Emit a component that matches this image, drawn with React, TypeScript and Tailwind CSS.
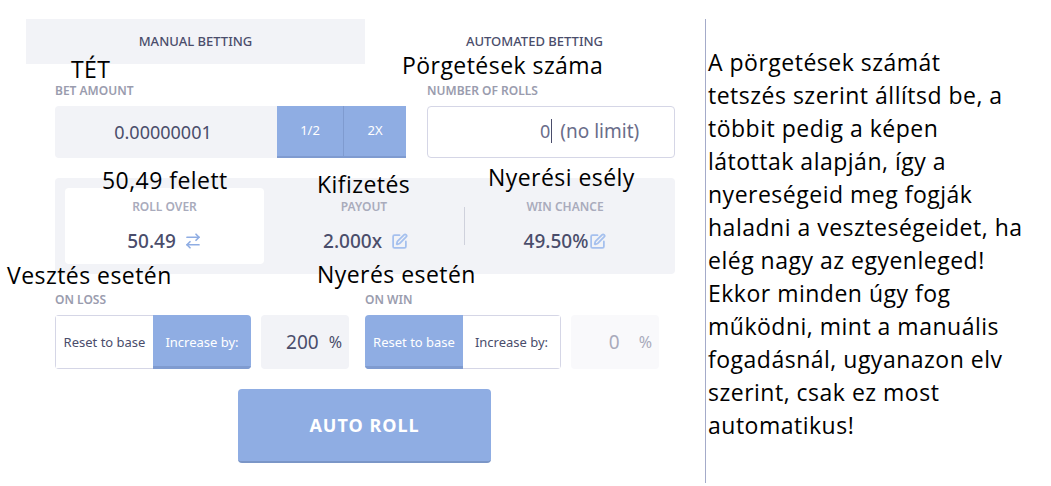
import { ArrowRightLeft, SquarePen } from "lucide-react";

const note = "absolute whitespace-nowrap text-black text-[23px] leading-[26px] tracking-[0.45px] font-['Open_Sans',sans-serif]";
const label = "text-[12px] leading-[16px] font-semibold text-[#9a9cae] uppercase";

const lines = [
  "A pörgetések számát",
  "tetszés szerint állítsd be, a",
  "többit pedig a képen",
  "látottak alapján, így a",
  "nyereségeid meg fogják",
  "haladni a veszteségeidet, ha",
  "elég nagy az egyenleged!",
  "Ekkor minden úgy fog",
  "működni, mint a manuális",
  "fogadásnál, ugyanazon elv",
  "szerint, csak ez most",
  "automatikus!",
];

function Toggle({ active }: { active: "left" | "right" }) {
  const on = "w-[98px] flex items-center justify-center bg-[#8fade3] text-white border-b-[3px] border-[#7f9bd0] pt-[5px]";
  const off = "w-[98px] flex items-center justify-center text-[#4a4d6b] border-y border-[#d5d6e6] pt-[2px]";
  return (
    <div className="flex w-[196px] h-[54px] text-[13px] rounded-sm overflow-hidden">
      <div className={active === "left" ? on : `${off} border-l`}>Reset to base</div>
      <div className={active === "right" ? on : `${off} border-r`}>Increase by:</div>
    </div>
  );
}

export default function App() {
  return (
    <div className="relative flex w-[1051px] h-[486px] overflow-hidden bg-white font-['Noto_Sans',sans-serif]">
      <div className="w-[705px] h-[464px] mt-[19px] border-r border-[#a4abc9] box-content shrink-0">
        <div className="flex ml-[26px] w-[678px] h-[45px] text-[13px] font-medium text-[#4a4d6b]">
          <div className="w-[339px] flex items-center justify-center bg-[#f2f3f7]">MANUAL BETTING</div>
          <div className="w-[339px] flex items-center justify-center">AUTOMATED BETTING</div>
        </div>

        <div className="ml-[55px] w-[620px]">
          <div className="flex justify-between mt-[19px]">
            <div className="w-[351px]">
              <div className={label}>Bet amount</div>
              <div className="flex h-[52px] mt-[7px]">
                <div className="w-[222px] flex items-center justify-center bg-[#f2f3f7] rounded-l pr-[6px] text-[18px] text-[#4a4d6b]">0.00000001</div>
                <div className="w-[67px] flex items-center justify-center bg-[#8fade3] border-b-[2px] border-r border-[#7f9bd0] text-white text-[13px]">1/2</div>
                <div className="w-[62px] flex items-center justify-center bg-[#8fade3] border-b-[2px] border-[#7f9bd0] text-white text-[13px]">2X</div>
              </div>
            </div>
            <div className="w-[248px]">
              <div className={label}>Number of rolls</div>
              <div className="flex items-center h-[52px] mt-[7px] pl-[112px] pb-[2px] border border-[#d5d6e6] rounded text-[19px] text-[#6a6d8a]">
                <span className="border-r border-[#4a4d6b] pr-px leading-[24px] text-[18px]">0</span>
                <span className="ml-[8px]">(no limit)</span>
              </div>
            </div>
          </div>

          <div className="flex items-center h-[96px] mt-[20px] px-[10px] bg-[#f2f3f7] rounded">
            <div className="w-[199px] h-[76px] flex flex-col items-center bg-white rounded pt-[11px]">
              <div className={`${label} !text-[#a9abbc]`}>Roll over</div>
              <div className="flex items-center mt-[12px] text-[19px] font-medium text-[#4a4d6b]">
                50.49
                <ArrowRightLeft className="ml-[8px] w-[18px] h-[18px] text-[#8fade3]" strokeWidth={2.25} />
              </div>
            </div>
            <div className="w-[200px] h-[76px] flex flex-col items-center pt-[11px] pl-[3px]">
              <div className={`${label} !text-[#a9abbc] -ml-[3px]`}>Payout</div>
              <div className="flex items-center mt-[12px] text-[19px] font-medium text-[#4a4d6b]">
                2.000x
                <SquarePen className="ml-[9px] w-[17px] h-[17px] text-[#a5c0ee]" strokeWidth={2.5} />
              </div>
            </div>
            <div className="w-px h-[38px] bg-[#cfd1dc]" />
            <div className="flex-1 h-[76px] flex flex-col items-center pt-[11px]">
              <div className={`${label} !text-[#a9abbc]`}>Win chance</div>
              <div className="flex items-center mt-[12px] text-[19px] font-medium text-[#4a4d6b]">
                49.50%
                <SquarePen className="ml-px w-[17px] h-[17px] text-[#a5c0ee]" strokeWidth={2.5} />
              </div>
            </div>
          </div>

          <div className="flex mt-[18px]">
            <div className="w-[310px]">
              <div className={label}>On loss</div>
              <div className="flex gap-[10px] mt-[7px]">
                <Toggle active="right" />
                <div className="w-[88px] h-[54px] flex items-center justify-end pr-[7px] bg-[#f2f3f7] rounded text-[#4a4d6b]">
                  <span className="text-[19px]">200</span>
                  <span className="ml-[10px] text-[16px]">%</span>
                </div>
              </div>
            </div>
            <div>
              <div className={label}>On win</div>
              <div className="flex gap-[10px] mt-[7px]">
                <Toggle active="left" />
                <div className="w-[88px] h-[54px] flex items-center justify-end pr-[7px] bg-[#f9f9fb] rounded text-[#a9abbc]">
                  <span className="text-[19px]">0</span>
                  <span className="ml-[19px] text-[16px]">%</span>
                </div>
              </div>
            </div>
          </div>

          <div className="flex justify-center mt-[20px] pr-px">
            <div className="w-[253px] h-[74px] flex items-center justify-center pt-px bg-[#8fade3] border-b-[2px] border-[#7b96c7] rounded-sm text-white text-[18px] font-bold tracking-[1px]">
              AUTO ROLL
            </div>
          </div>
        </div>
      </div>

      <div className="ml-[2px] mt-[46px] text-[23px] leading-[33px] tracking-[0.5px] text-black whitespace-nowrap font-['Open_Sans',sans-serif]">
        {lines.map((line) => (
          <div key={line}>{line}</div>
        ))}
      </div>

      <span className={`${note} left-[71px] top-[56px]`}>TÉT</span>
      <span className={`${note} left-[402px] top-[52px]`}>Pörgetések száma</span>
      <span className={`${note} left-[102px] top-[167px]`}>50,49 felett</span>
      <span className={`${note} left-[317px] top-[171px]`}>Kifizetés</span>
      <span className={`${note} left-[488px] top-[164px]`}>Nyerési esély</span>
      <span className={`${note} left-[7px] top-[262px]`}>Vesztés esetén</span>
      <span className={`${note} left-[317px] top-[261px]`}>Nyerés esetén</span>
    </div>
  );
}
